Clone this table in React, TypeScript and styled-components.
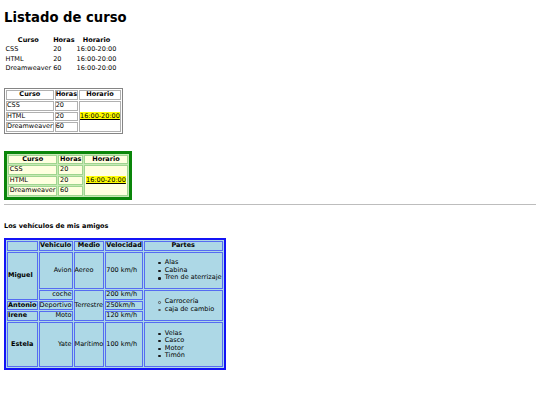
import React from "react";
import styled, { createGlobalStyle, css } from "styled-components";

const GlobalStyle = createGlobalStyle`
  html, body { margin: 0; padding: 0; background: #ffffff; }
  body {
    font-family: "DejaVu Sans", Verdana, sans-serif;
    font-size: 6.5px;
    line-height: 7.55px;
    color: #000000;
  }
`;

const Page = styled.div`
  display: flex;
  flex-direction: column;
  align-items: flex-start;
  padding: 0 4px;
`;

const Title = styled.h1`
  font-size: 13.2px;
  font-weight: bold;
  margin: 9.6px 0 10.5px;
  line-height: 15px;
`;

type Variant = "plain" | "gray" | "green";

const CourseTable = styled.table<{ $variant: Variant; $gap: number }>`
  border-collapse: separate;
  border-spacing: 1px;
  margin-top: ${(p) => p.$gap}px;
  font-size: 6.5px;
  line-height: 7.55px;
  ${(p) =>
    p.$variant === "gray" &&
    css`
      border: 1px solid #858585;
    `}
  ${(p) =>
    p.$variant === "green" &&
    css`
      border: 3px solid #0a860a;
      background: #c6e8b6;
    `}
`;

const CourseCell = styled.td<{ $variant: Variant; $head?: boolean }>`
  padding: ${(p) =>
    p.$variant === "plain" ? "0.5px" : p.$variant === "green" ? "0 0.8px" : "0"};
  font-weight: ${(p) => (p.$head ? "bold" : "normal")};
  text-align: ${(p) => (p.$head ? "center" : "left")};
  vertical-align: middle;
  white-space: nowrap;
  ${(p) =>
    p.$variant === "gray" &&
    css`
      border: 1px solid #b0b0b0;
    `}
  ${(p) =>
    p.$variant === "green" &&
    css`
      border: 1px solid #9fd58f;
      background: #ffffe0;
    `}
`;

const Highlight = styled.span`
  background: #ffff00;
  text-decoration: underline;
`;

const Rule = styled.hr`
  align-self: stretch;
  margin: 4.3px 0 0;
  border: 0;
  border-top: 1px solid #bdbdbd;
  height: 0;
`;

const SectionLabel = styled.p`
  margin: 17.7px 0 0;
  font-weight: bold;
  font-size: 6.5px;
  line-height: 7.55px;
`;

const VehicleTable = styled.table`
  border-collapse: separate;
  border-spacing: 1px;
  border: 2px solid #1414f5;
  background: #add8e6;
  margin-top: 7.8px;
  font-size: 6.5px;
  line-height: 7.55px;
`;

type Align = "left" | "center" | "right";

const VHead = styled.th<{ $align?: Align }>`
  padding: 0;
  border: 1px solid #566cf2;
  font-weight: bold;
  text-align: ${(p) => p.$align ?? "center"};
  vertical-align: middle;
  white-space: nowrap;
`;

const VCell = styled.td<{ $align?: Align }>`
  padding: 0;
  border: 1px solid #566cf2;
  text-align: ${(p) => p.$align ?? "left"};
  vertical-align: middle;
  white-space: nowrap;
`;

const PartsList = styled.ul`
  margin: 6.5px 0;
  padding: 0 0 0 13.5px;
  list-style: none;
`;

const Part = styled.li`
  display: flex;
  align-items: center;
  line-height: 7.55px;
`;

const Bullet = styled.span<{ $marker: "disc" | "circle" }>`
  flex: none;
  box-sizing: border-box;
  width: 2.2px;
  height: 2.2px;
  margin: 0.8px 4.3px 0 0;
  border-radius: 50%;
  ${(p) =>
    p.$marker === "disc"
      ? css`
          background: #1a1a1a;
        `
      : css`
          border: 0.6px solid #555;
          width: 2.6px;
          height: 2.6px;
          margin-right: 3.9px;
        `}
`;

function Parts({ items, marker }: { items: string[]; marker: "disc" | "circle" }) {
  return (
    <PartsList>
      {items.map((it) => (
        <Part key={it}>
          <Bullet $marker={marker} />
          {it}
        </Part>
      ))}
    </PartsList>
  );
}

const courses = [
  { name: "CSS", hours: "20" },
  { name: "HTML", hours: "20" },
  { name: "Dreamweaver", hours: "60" },
];

function Courses({ variant, gap }: { variant: Variant; gap: number }) {
  const plain = variant === "plain";
  return (
    <CourseTable $variant={variant} $gap={gap}>
      <tbody>
        <tr>
          <CourseCell as="th" $variant={variant} $head>Curso</CourseCell>
          <CourseCell as="th" $variant={variant} $head>Horas</CourseCell>
          <CourseCell as="th" $variant={variant} $head>Horario</CourseCell>
        </tr>
        {courses.map((c, i) => (
          <tr key={c.name}>
            <CourseCell $variant={variant}>{c.name}</CourseCell>
            <CourseCell $variant={variant}>{c.hours}</CourseCell>
            {plain ? (
              <CourseCell $variant={variant}>16:00-20:00</CourseCell>
            ) : (
              i === 0 && (
                <CourseCell $variant={variant} rowSpan={3}>
                  <Highlight>16:00-20:00</Highlight>
                </CourseCell>
              )
            )}
          </tr>
        ))}
      </tbody>
    </CourseTable>
  );
}

function Vehicles() {
  return (
    <VehicleTable>
      <tbody>
        <tr>
          <VHead></VHead>
          <VHead>Vehiculo</VHead>
          <VHead>Medio</VHead>
          <VHead>Velocidad</VHead>
          <VHead>Partes</VHead>
        </tr>
        <tr>
          <VHead $align="left" rowSpan={2}>Miguel</VHead>
          <VCell $align="right">Avion</VCell>
          <VCell>Aereo</VCell>
          <VCell>700 km/h</VCell>
          <VCell>
            <Parts marker="disc" items={["Alas", "Cabina", "Tren de aterrizaje"]} />
          </VCell>
        </tr>
        <tr>
          <VCell $align="right">coche</VCell>
          <VCell rowSpan={3}>Terrestre</VCell>
          <VCell>200 km/h</VCell>
          <VCell rowSpan={3}>
            <Parts marker="circle" items={["Carrocería", "caja de cambio"]} />
          </VCell>
        </tr>
        <tr>
          <VHead $align="left">Antonio</VHead>
          <VCell $align="right">Deportivo</VCell>
          <VCell>250km/h</VCell>
        </tr>
        <tr>
          <VHead $align="left">Irene</VHead>
          <VCell $align="right">Moto</VCell>
          <VCell>120 km/h</VCell>
        </tr>
        <tr>
          <VHead>Estela</VHead>
          <VCell $align="right">Yate</VCell>
          <VCell>Marítimo</VCell>
          <VCell>100 km/h</VCell>
          <VCell>
            <Parts marker="disc" items={["Velas", "Casco", "Motor", "Timón"]} />
          </VCell>
        </tr>
      </tbody>
    </VehicleTable>
  );
}

export default function App() {
  return (
    <>
      <GlobalStyle />
      <Page>
        <Title>Listado de curso</Title>
        <Courses variant="plain" gap={0} />
        <Courses variant="gray" gap={14.2} />
        <Courses variant="green" gap={17} />
        <Rule />
        <SectionLabel>Los vehículos de mis amigos</SectionLabel>
        <Vehicles />
      </Page>
    </>
  );
}
